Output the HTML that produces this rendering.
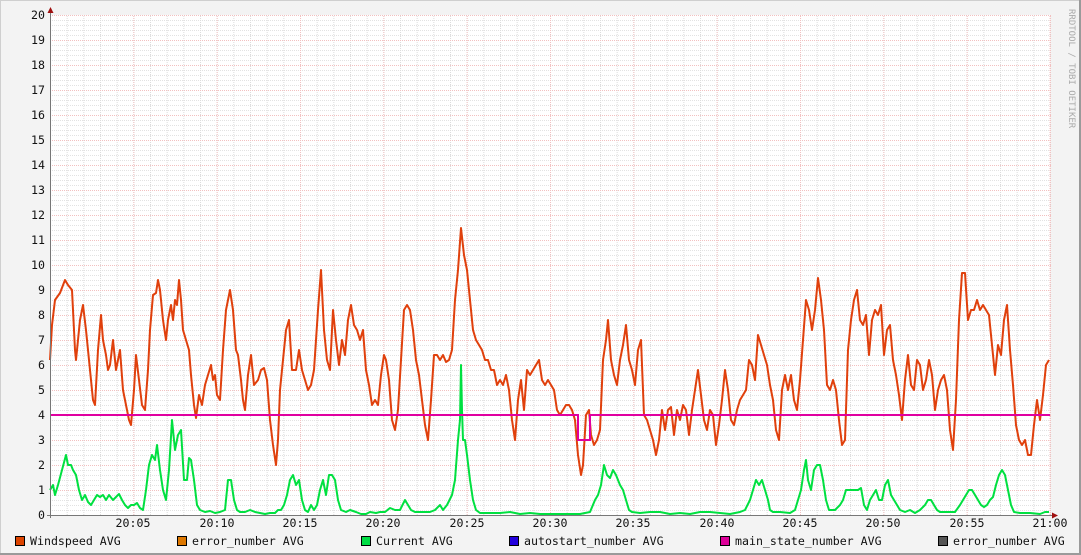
<!DOCTYPE html>
<html><head><meta charset="utf-8"><style>
html,body{margin:0;padding:0;}
body{width:1081px;height:555px;overflow:hidden;background:#f3f3f3;}
svg{display:block;}
text{font-family:"DejaVu Sans Mono","Liberation Mono",monospace;font-size:11.6px;fill:#111;}
</style></head><body>
<svg width="1081" height="555" viewBox="0 0 1081 555" xmlns="http://www.w3.org/2000/svg">
<defs>
<pattern id="hmin" x="0" y="15" width="10" height="5" patternUnits="userSpaceOnUse"><line x1="0" y1="0.5" x2="10" y2="0.5" stroke="#e2e2e2" stroke-width="1" stroke-dasharray="1,1"/></pattern>
<pattern id="vmin" x="50" y="0" width="16.6667" height="2" patternUnits="userSpaceOnUse"><line x1="0.5" y1="0" x2="0.5" y2="2" stroke="#dcdcdc" stroke-width="1" stroke-dasharray="1,1"/></pattern>
<pattern id="hmaj" x="0" y="15" width="10" height="25" patternUnits="userSpaceOnUse"><line x1="0" y1="0.5" x2="10" y2="0.5" stroke="#f2c0c0" stroke-width="1" stroke-dasharray="1,1"/></pattern>
<pattern id="vmaj" x="50" y="0" width="83.3333" height="2" patternUnits="userSpaceOnUse"><line x1="0.5" y1="0" x2="0.5" y2="2" stroke="#f2c0c0" stroke-width="1" stroke-dasharray="1,1"/></pattern>
</defs>
<rect x="0" y="0" width="1081" height="555" fill="#f3f3f3"/>
<rect x="0.5" y="0.5" width="1080" height="554" fill="none" stroke="#cfcfcf"/>
<line x1="0" y1="554" x2="1081" y2="554" stroke="#9a9a9a" stroke-width="2"/>
<line x1="1080" y1="0" x2="1080" y2="555" stroke="#9a9a9a" stroke-width="2"/>
<rect x="50" y="15" width="1000" height="500" fill="#fff"/>
<rect x="51" y="15" width="1000" height="500" fill="url(#hmin)"/>
<rect x="50" y="15" width="1000" height="500" fill="url(#vmin)"/>
<rect x="51" y="15" width="1000" height="500" fill="url(#hmaj)"/>
<rect x="50" y="15" width="1001" height="500" fill="url(#vmaj)"/>
<g text-anchor="end">
<text x="45" y="19">20</text><text x="45" y="44">19</text><text x="45" y="69">18</text><text x="45" y="94">17</text><text x="45" y="119">16</text><text x="45" y="144">15</text><text x="45" y="169">14</text><text x="45" y="194">13</text><text x="45" y="219">12</text><text x="45" y="244">11</text><text x="45" y="269">10</text><text x="45" y="294">9</text><text x="45" y="319">8</text><text x="45" y="344">7</text><text x="45" y="369">6</text><text x="45" y="394">5</text><text x="45" y="419">4</text><text x="45" y="444">3</text><text x="45" y="469">2</text><text x="45" y="494">1</text><text x="45" y="519">0</text>
</g>
<g text-anchor="middle">
<text x="133" y="527">20:05</text><text x="217" y="527">20:10</text><text x="300" y="527">20:15</text><text x="383" y="527">20:20</text><text x="467" y="527">20:25</text><text x="550" y="527">20:30</text><text x="633" y="527">20:35</text><text x="717" y="527">20:40</text><text x="800" y="527">20:45</text><text x="883" y="527">20:50</text><text x="967" y="527">20:55</text><text x="1050" y="527">21:00</text>
</g>
<text transform="translate(1069,9) rotate(90)" style="font-size:9px;fill:#aaa;">RRDTOOL / TOBI OETIKER</text>
<polyline fill="none" stroke="#00e040" stroke-width="2" stroke-linejoin="round" points="50,490 53,485 55,495 58,485 62,470 66,455 68,465 71,465 73,470 76,475 79,490 82,500 85,495 88,502 91,505 94,500 97,495 100,497 103,495 106,500 109,495 113,500 116,497 119,494 122,500 125,505 128,508 131,505 134,505 137,503 140,508 143,510 146,490 149,465 152,455 155,460 157,445 160,470 163,490 166,500 169,470 172,420 175,450 178,435 181,430 184,480 187,480 189,458 191,460 194,480 197,505 200,510 205,512 210,511 215,513 220,512 225,510 228,480 231,480 234,500 237,510 240,512 245,512 250,510 255,512 260,513 265,514 270,513 275,513 278,510 281,510 284,505 287,495 290,480 293,475 296,485 299,480 302,500 305,510 308,512 311,505 314,510 317,505 320,490 323,480 326,495 329,475 332,475 335,480 338,500 341,510 346,512 350,510 356,512 361,514 366,514 370,512 376,513 380,512 385,512 390,508 395,510 400,510 405,500 408,505 411,510 415,512 420,512 425,512 430,512 435,510 440,505 443,510 447,505 452,495 455,480 458,440 460,420 461,365 462,410 463,440 465,440 467,455 470,480 473,500 476,510 480,513 490,513 500,513 510,512 520,514 530,513 540,514 550,514 560,514 570,514 580,514 590,512 595,500 598,495 601,485 604,465 607,475 610,478 613,470 616,475 620,485 623,490 626,500 629,510 632,512 640,513 650,512 660,512 670,514 680,513 690,514 700,512 710,512 720,513 730,514 740,512 745,510 750,500 753,490 756,480 759,485 762,480 765,490 768,500 770,510 773,512 780,512 790,513 795,510 798,500 801,490 804,470 806,460 808,480 811,490 814,470 817,465 820,465 823,480 826,500 829,510 835,510 840,505 843,500 846,490 849,490 852,490 855,490 858,490 861,488 864,505 867,510 870,500 873,495 876,490 879,500 882,500 885,485 888,480 891,495 894,500 897,505 900,510 905,512 910,510 915,513 920,510 925,505 928,500 931,500 934,505 937,510 940,512 945,512 950,512 955,512 960,505 963,500 966,495 969,490 972,490 975,495 978,500 981,505 984,507 987,505 990,500 993,497 996,485 999,475 1002,470 1005,475 1008,490 1011,505 1014,512 1020,513 1030,513 1040,514 1045,512 1049,512"/>
<polyline fill="none" stroke="#e0400c" stroke-width="2" stroke-linejoin="round" points="50,360 52,325 55,300 60,293 65,280 68,285 72,290 75,350 76,360 80,320 83,305 86,330 90,370 93,400 95,405 98,350 101,315 103,340 106,355 108,370 110,365 113,340 116,370 120,350 123,390 126,405 129,420 131,425 134,390 136,355 139,380 142,405 145,410 148,370 150,330 153,295 156,293 158,280 160,290 163,320 166,340 168,320 171,305 173,320 175,300 177,305 179,280 181,300 183,330 186,340 189,350 191,375 194,405 196,418 199,395 202,405 205,385 208,375 211,365 213,380 215,375 217,395 220,400 223,350 226,310 230,290 233,310 236,350 238,355 241,380 243,400 245,410 248,375 251,355 254,385 258,380 261,370 264,368 267,380 270,420 273,445 276,465 278,440 280,390 283,360 286,330 289,320 292,370 296,370 299,350 302,370 305,380 308,390 311,385 314,370 318,310 321,270 324,330 327,360 330,370 333,310 336,340 339,365 342,340 345,355 348,320 351,305 354,325 357,330 360,340 363,330 366,370 369,385 372,405 375,400 378,405 381,375 384,355 386,360 389,380 392,420 395,430 398,410 401,360 404,310 407,305 410,310 413,330 416,360 419,375 422,400 425,425 428,440 431,400 434,355 437,355 440,360 443,355 446,362 449,360 452,350 455,300 458,270 461,228 464,255 467,270 470,300 473,330 476,340 479,345 482,350 485,360 488,360 491,370 494,370 497,385 500,380 503,385 506,375 509,390 512,420 515,440 518,400 521,380 524,410 527,370 530,375 533,370 536,365 539,360 542,380 545,385 548,380 551,385 554,390 557,410 560,415 563,410 566,405 569,405 572,410 575,420 578,455 581,475 583,465 586,415 589,410 591,435 594,445 597,440 600,430 603,360 606,340 608,320 611,360 614,375 617,385 620,360 623,345 626,325 629,360 632,370 635,385 638,350 641,340 644,415 647,420 650,430 653,440 656,455 659,440 662,410 665,430 668,410 671,407 674,435 677,410 680,420 683,405 686,410 689,435 692,410 695,390 698,370 701,395 704,420 707,430 710,410 713,415 716,445 719,425 722,400 725,370 728,390 731,420 734,425 737,410 740,400 743,395 746,390 749,360 752,365 755,380 758,335 761,345 764,355 767,365 770,385 773,400 776,430 779,440 782,390 785,375 788,390 791,375 794,400 797,410 800,380 803,340 806,300 809,310 812,330 815,310 818,278 821,300 824,330 827,385 830,390 833,380 836,390 839,420 842,445 845,440 848,350 851,320 854,300 857,290 860,320 863,325 866,315 869,355 872,320 875,310 878,315 881,305 884,355 887,330 890,325 893,360 896,375 899,395 902,420 905,380 908,355 911,385 914,390 917,360 920,365 923,390 926,380 929,360 932,375 935,410 938,390 941,380 944,375 947,390 950,430 953,450 956,400 959,320 962,273 965,273 968,320 971,310 974,310 977,300 980,310 983,305 986,310 989,315 992,345 995,375 998,345 1001,355 1004,320 1007,305 1010,350 1013,385 1016,425 1019,440 1022,445 1025,440 1028,455 1031,455 1034,425 1037,400 1040,420 1043,395 1046,365 1049,360"/>
<polyline fill="none" stroke="#e000a0" stroke-width="2" points="50,415 578,415 578,440 590,440 590,415 1050,415"/>
<line x1="50.5" y1="12" x2="50.5" y2="518" stroke="#777" stroke-width="1"/>
<line x1="47" y1="515.5" x2="1054" y2="515.5" stroke="#777" stroke-width="1"/>
<polygon points="47.5,13 53.5,13 50.5,7" fill="#a01010"/>
<polygon points="1052,512.5 1052,518.5 1058,515.5" fill="#a01010"/>
<g stroke="#000" stroke-width="1">
<rect x="15.5" y="536.5" width="9" height="9" fill="#dd4400"/>
<rect x="177.5" y="536.5" width="9" height="9" fill="#dd7700"/>
<rect x="361.5" y="536.5" width="9" height="9" fill="#00dd44"/>
<rect x="509.5" y="536.5" width="9" height="9" fill="#2200dd"/>
<rect x="720.5" y="536.5" width="9" height="9" fill="#dd0099"/>
<rect x="938.5" y="536.5" width="9" height="9" fill="#555555"/>
</g>
<text x="30" y="545">Windspeed AVG</text>
<text x="192" y="545">error_number AVG</text>
<text x="376" y="545">Current AVG</text>
<text x="524" y="545">autostart_number AVG</text>
<text x="735" y="545">main_state_number AVG</text>
<text x="953" y="545">error_number AVG</text>
</svg>
</body></html>
